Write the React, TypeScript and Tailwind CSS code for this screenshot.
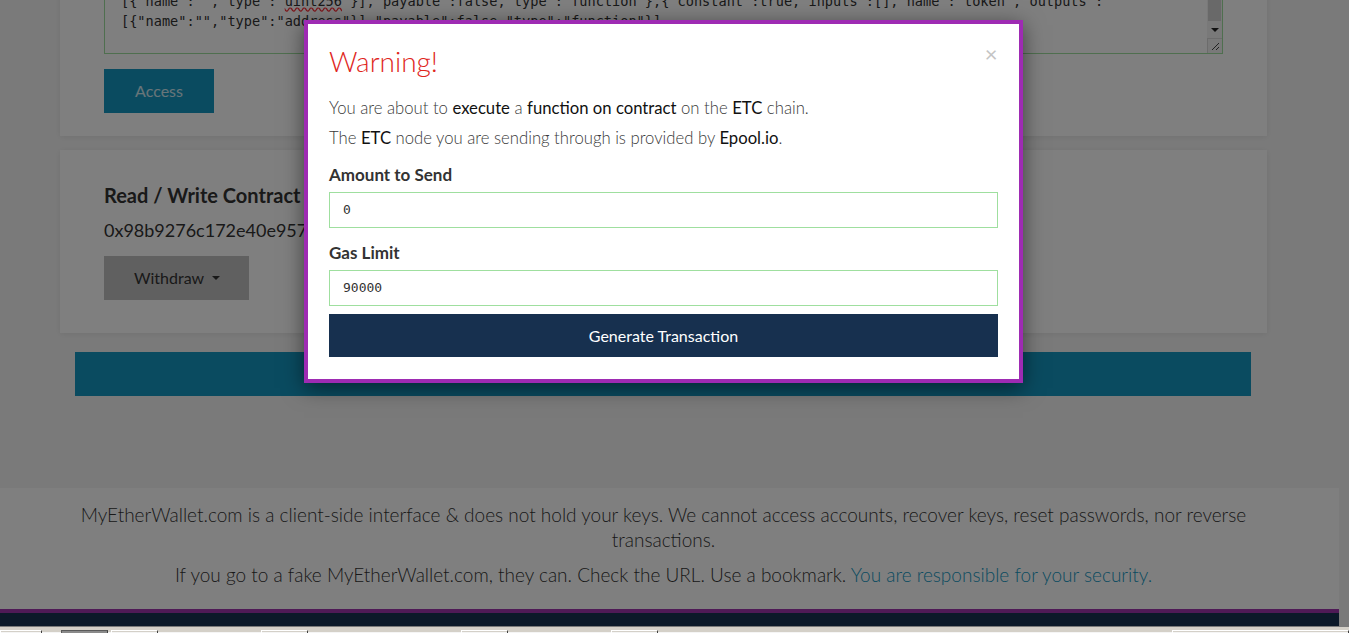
import React from 'react';

const abiLines = [
  '[{"constant":false,"inputs":[{"name":"_to","type":"address"},{"name":"_value","type":"uint256"}],"name":"withdraw",',
  '"outputs":[],"payable":false,"type":"function"},{"constant":true,"inputs":[],"name":"balance","outputs":',
  '[{"name":"","type":"uint256"}],"payable":false,"type":"function"},{"constant":true,"inputs":[],"name":"owner","outputs":',
];

const mono = "font-['DejaVu_Sans_Mono','Liberation_Mono',monospace]";

const ContractCard = () => (
  <div className="bg-white px-[44px] pt-[24px] pb-[23px] shadow-[0_1px_6px_rgba(0,0,0,0.08)]">
    {/* textarea del ABI, desplazado hacia arriba */}
    <div className="flex h-[130px] border border-[#9fdf9f] bg-white">
      <div className={`flex-1 overflow-hidden whitespace-pre pl-[16px] pt-[6px] text-[13.6px] leading-[20px] text-[#333] ${mono}`}>
        {abiLines.map((l) => (
          <div key={l}>{l}</div>
        ))}
        <div>
          {'[{"name":"","type":"'}
          <span className="underline decoration-wavy decoration-red-500">uint256</span>
          {'"}],"payable":false,"type":"function"},{"constant":true,"inputs":[],"name":"token","outputs":'}
        </div>
        <div>{'[{"name":"","type":"address"}],"payable":false,"type":"function"}]'}</div>
      </div>
      <div className="flex w-[15px] flex-col bg-[#f3f3f3]">
        <div className="flex h-[96px] flex-col justify-end px-[1px]">
          <div className="h-[56px] bg-[#d2d2d2]" />
        </div>
        <div className="flex h-[17px] items-center justify-center">
          <div className="h-0 w-0 border-x-[4px] border-t-[4px] border-x-transparent border-t-[#222]" />
        </div>
        <div className="flex h-[15px] items-end justify-end border-t border-l border-[#d8d8d8] pr-[2px] pb-[2px]">
          <svg width="9" height="9" viewBox="0 0 9 9">
            <path d="M1 8 L8 1 M5 8 L8 5" stroke="#444" strokeWidth="1" />
          </svg>
        </div>
      </div>
    </div>
    <button className="mt-[15px] h-[44px] w-[110px] bg-[#1497c1] text-[16px] text-white/80">Access</button>
  </div>
);

const ReadWriteCard = () => (
  <div className="mt-[14px] bg-white px-[44px] pt-[33px] pb-[33px] shadow-[0_1px_6px_rgba(0,0,0,0.08)]">
    <h3 className="text-[20px] font-bold leading-[24px] text-[#333]">Read / Write Contract</h3>
    <div className="mt-[11px] text-[18px] leading-[24px] text-[#333]">0x98b9276c172e40e957e6b04ee0a5f0d3a8b1c9f2</div>
    <button className="mt-[14px] flex h-[44px] w-[145px] items-center pl-[30px] bg-[#c0c0c0] text-[16px] text-[#333]">
      Withdraw
      <span className="ml-[8px] h-0 w-0 border-x-[4px] border-t-[4px] border-x-transparent border-t-[#333]" />
    </button>
  </div>
);

const Footer = () => (
  <div className="mt-[92px] w-[1339px]">
    <div className="bg-white pt-[14px] pb-[22px]">
      <div className="ml-[60px] w-[1207px] text-center text-[19px] font-light leading-[25px] text-[#333]">
        <p>
          MyEtherWallet.com is a client-side interface &amp; does not hold your keys. We cannot access accounts, recover keys, reset passwords, nor reverse
          <br />
          transactions.
        </p>
        <p className="mt-[10px]">
          If you go to a fake MyEtherWallet.com, they can. Check the URL. Use a bookmark.{' '}
          <a className="text-[#1597c1]">You are responsible for your security.</a>
        </p>
      </div>
    </div>
    <div className="h-[4px] bg-[#9e34ac]" />
    <div className="h-[13px] bg-[#183252]" />
  </div>
);

const Taskbar = () => {
  const boxes = [
    { ml: 0, w: 42, dark: false },
    { ml: 19, w: 47, dark: true },
    { ml: 3, w: 47, dark: false },
    { ml: 103, w: 47, dark: false },
    { ml: 153, w: 47, dark: false },
    { ml: 103, w: 47, dark: false },
    { ml: 514, w: 177, dark: false },
  ];
  return (
    <div className="flex h-[6px] border-t border-[#f4f4f4] bg-[#d4d0c8] pt-[3px]">
      {boxes.map((b, i) => (
        <div
          key={i}
          className={`h-[3px] border-t border-l ${b.dark ? 'border-[#5a5a5a] bg-[#8a8a8a]' : 'border-white'} border-r border-r-[#404040]`}
          style={{ marginLeft: b.ml, width: b.w }}
        />
      ))}
    </div>
  );
};

const WarningModal = () => (
  <div className="relative w-[719px] border-4 border-[#9e2bb3] bg-white px-[21px] pt-[21px] pb-[22px] shadow-[0_5px_20px_rgba(0,0,0,0.5)]">
    <div className="absolute top-[20px] right-[22px] flex h-[20px] w-[12px] items-center justify-center text-[22px] leading-none text-[#c4c4c4]">
      ×
    </div>
    <h2 className="h-[33px] text-[28px] font-light leading-[33px] text-[#e0261c]">Warning!</h2>
    <p className="mt-[20px] text-[16.7px] font-light leading-[20px] text-[#3a3a3a]">
      You are about to <span className="font-normal text-[#111]">execute</span> a{' '}
      <span className="font-normal text-[#111]">function on contract</span> on the{' '}
      <span className="font-normal text-[#111]">ETC</span> chain.
    </p>
    <p className="mt-[10px] text-[16.7px] font-light leading-[20px] text-[#3a3a3a]">
      The <span className="font-normal text-[#111]">ETC</span> node you are sending through is provided by{' '}
      <span className="font-normal text-[#111]">Epool.io</span>.
    </p>
    <label className="mt-[17px] block text-[17px] font-bold leading-[20px] text-[#333]">Amount to Send</label>
    <div className={`mt-[7px] flex h-[36px] items-center border border-[#9fdf9f] pl-[13px] text-[13px] text-[#333] ${mono}`}>0</div>
    <label className="mt-[15px] block text-[17px] font-bold leading-[20px] text-[#333]">Gas Limit</label>
    <div className={`mt-[7px] flex h-[36px] items-center border border-[#9fdf9f] pl-[13px] text-[13px] text-[#333] ${mono}`}>90000</div>
    <button className="mt-[8px] h-[43px] w-full bg-[#17304f] text-[16px] text-white">Generate Transaction</button>
  </div>
);

export default function App() {
  return (
    <div className="relative h-[633px] w-[1349px] overflow-hidden bg-[#f5f5f5] font-['Lato','Open_Sans',sans-serif]">
      <div className="-mt-[100px] flex flex-col">
        <div className="ml-[60px] w-[1207px]">
          <ContractCard />
          <ReadWriteCard />
          <div className="mt-[19px] ml-[15px] h-[44px] w-[1176px] bg-[#1497c1]" />
        </div>
        <Footer />
        <Taskbar />
      </div>

      {/* capa oscura del modal */}
      <div className="absolute top-0 left-0 flex h-[627px] w-full justify-start bg-black/50">
        <div className="flex w-[1327px] justify-center pt-[20px]">
          <div className="h-fit">
            <WarningModal />
          </div>
        </div>
      </div>
    </div>
  );
}
